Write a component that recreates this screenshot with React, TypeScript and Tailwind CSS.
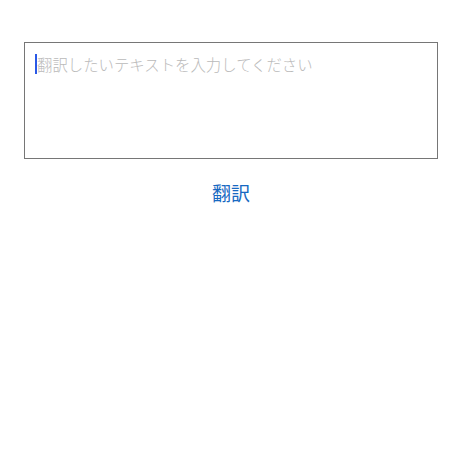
import React from "react";

export default function App() {
  return (
    <div
      className="w-[462px] h-[458px] bg-white px-6 pt-[42px]"
      style={{ fontFamily: '"Noto Sans CJK JP", "Noto Sans", sans-serif' }}
    >
      <div className="relative">
        <textarea
          className="block w-[414px] h-[117px] border border-[#767676] px-3 py-[10px] text-[15.4px] leading-[22px] font-light text-[#222] placeholder:text-[#bababa] outline-none resize-none"
          style={{ fontFamily: '"Noto Sans CJK JP", "Noto Sans", sans-serif' }}
          placeholder="翻訳したいテキストを入力してください"
        />
        <div className="absolute left-[11px] top-[12px] w-[2px] h-[20px] bg-[#2a58e6]" />
      </div>
      <div className="flex justify-center mt-[21px]">
        <button className="text-[19px] leading-[26px] text-[#1769c2] bg-transparent">
          翻訳
        </button>
      </div>
    </div>
  );
}
